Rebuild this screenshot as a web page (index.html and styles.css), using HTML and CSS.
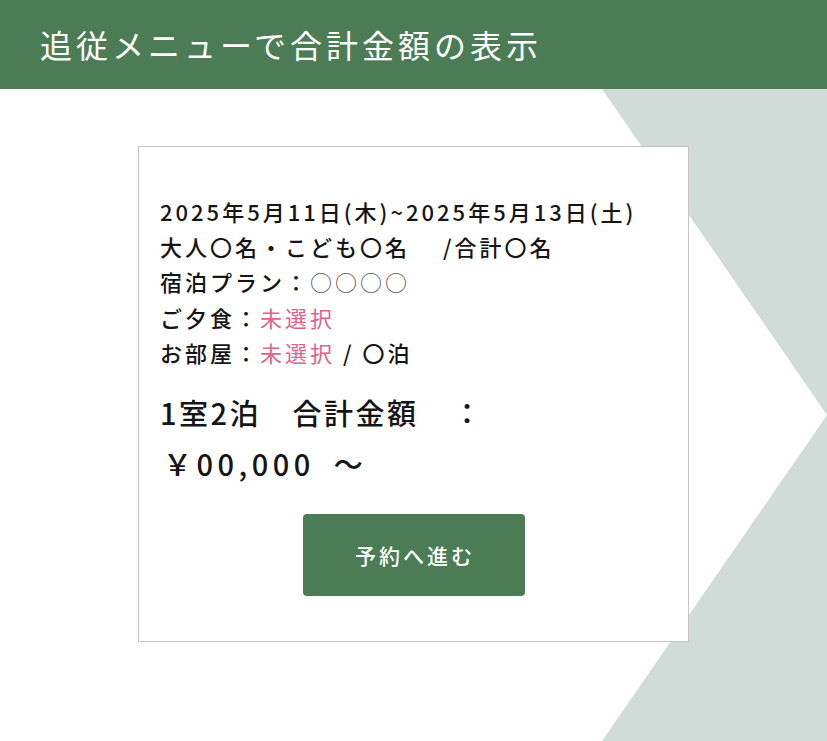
FILE: index.html
```html
<!DOCTYPE html>
<html lang="ja">
<head>
<meta charset="utf-8">
<title>追従メニューで合計金額の表示</title>
<link rel="stylesheet" href="styles.css">
</head>
<body>
<header class="page-header">
  <h1 class="page-title">追従メニューで合計金額の表示</h1>
</header>
<main class="stage">
  <section class="summary-card">
    <div class="details">
      <p class="line">2025年5月11日(木)~2025年5月13日(土)</p>
      <p class="line">大人〇名・こども〇名　 /合計〇名</p>
      <p class="line">宿泊プラン：<span class="plan">○○○○</span></p>
      <p class="line">ご夕食：<span class="unset">未選択</span></p>
      <p class="line">お部屋：<span class="unset">未選択</span> / 〇泊</p>
    </div>
    <div class="total">
      <p class="total-line">1室2泊　合計金額<span class="colon">：</span></p>
      <p class="total-line price">￥00,000&#8194;～</p>
    </div>
    <div class="actions">
      <a class="reserve-btn" href="#">予約へ進む</a>
    </div>
  </section>
</main>
</body>
</html>
```

FILE: styles.css
```css
* { box-sizing: border-box; }
html, body { margin: 0; padding: 0; }
body {
  width: 827px;
  height: 741px;
  overflow: hidden;
  background: #ffffff;
  font-family: "Noto Sans CJK JP", "Noto Sans", sans-serif;
  color: #151515;
}
.page-header {
  height: 89px;
  background: #4b7c56;
  display: flex;
  align-items: center;
  padding-left: 40px;
}
.page-title {
  margin: 0;
  color: #ffffff;
  font-size: 32px;
  font-weight: 400;
  letter-spacing: 4px;
  line-height: 1;
  padding-bottom: 2px;
}
.stage {
  position: relative;
  height: 652px;
  padding: 57px 0 0 138px;
}
.stage::before {
  content: "";
  position: absolute;
  top: 0;
  right: 0;
  width: 225px;
  height: 100%;
  background: #d1dcd9;
  clip-path: polygon(0 0, 100% 0, 100% 100%, 0 100%, 100% 50%);
}
.summary-card {
  position: relative;
  width: 551px;
  height: 496px;
  background: #ffffff;
  border: 1px solid #c4c4c4;
  padding: 47px 20px 0 21px;
}
.details .line {
  margin: 0;
  font-size: 22px;
  line-height: 35.2px;
  letter-spacing: 3px;
  font-weight: 500;
  white-space: nowrap;
}
.plan {
  color: #555555;
  font-weight: 400;
}
.unset {
  color: #e0628a;
  font-weight: 400;
}
.total {
  margin-top: 17px;
}
.total-line {
  margin: 0;
  font-size: 29px;
  line-height: 51px;
  letter-spacing: 2.5px;
  font-weight: 500;
  white-space: nowrap;
}
.price {
  letter-spacing: 4.5px;
  padding-left: 3px;
}
.colon {
  margin-left: 34px;
}
.actions {
  display: flex;
  justify-content: center;
  margin-top: 25px;
  padding-right: 1px;
}
.reserve-btn {
  display: flex;
  align-items: center;
  justify-content: center;
  width: 222px;
  height: 82px;
  background: #4b7c56;
  border-radius: 4px;
  color: #ffffff;
  text-decoration: none;
  font-size: 21px;
  letter-spacing: 3px;
  font-weight: 500;
  padding-left: 3px;
}
```
